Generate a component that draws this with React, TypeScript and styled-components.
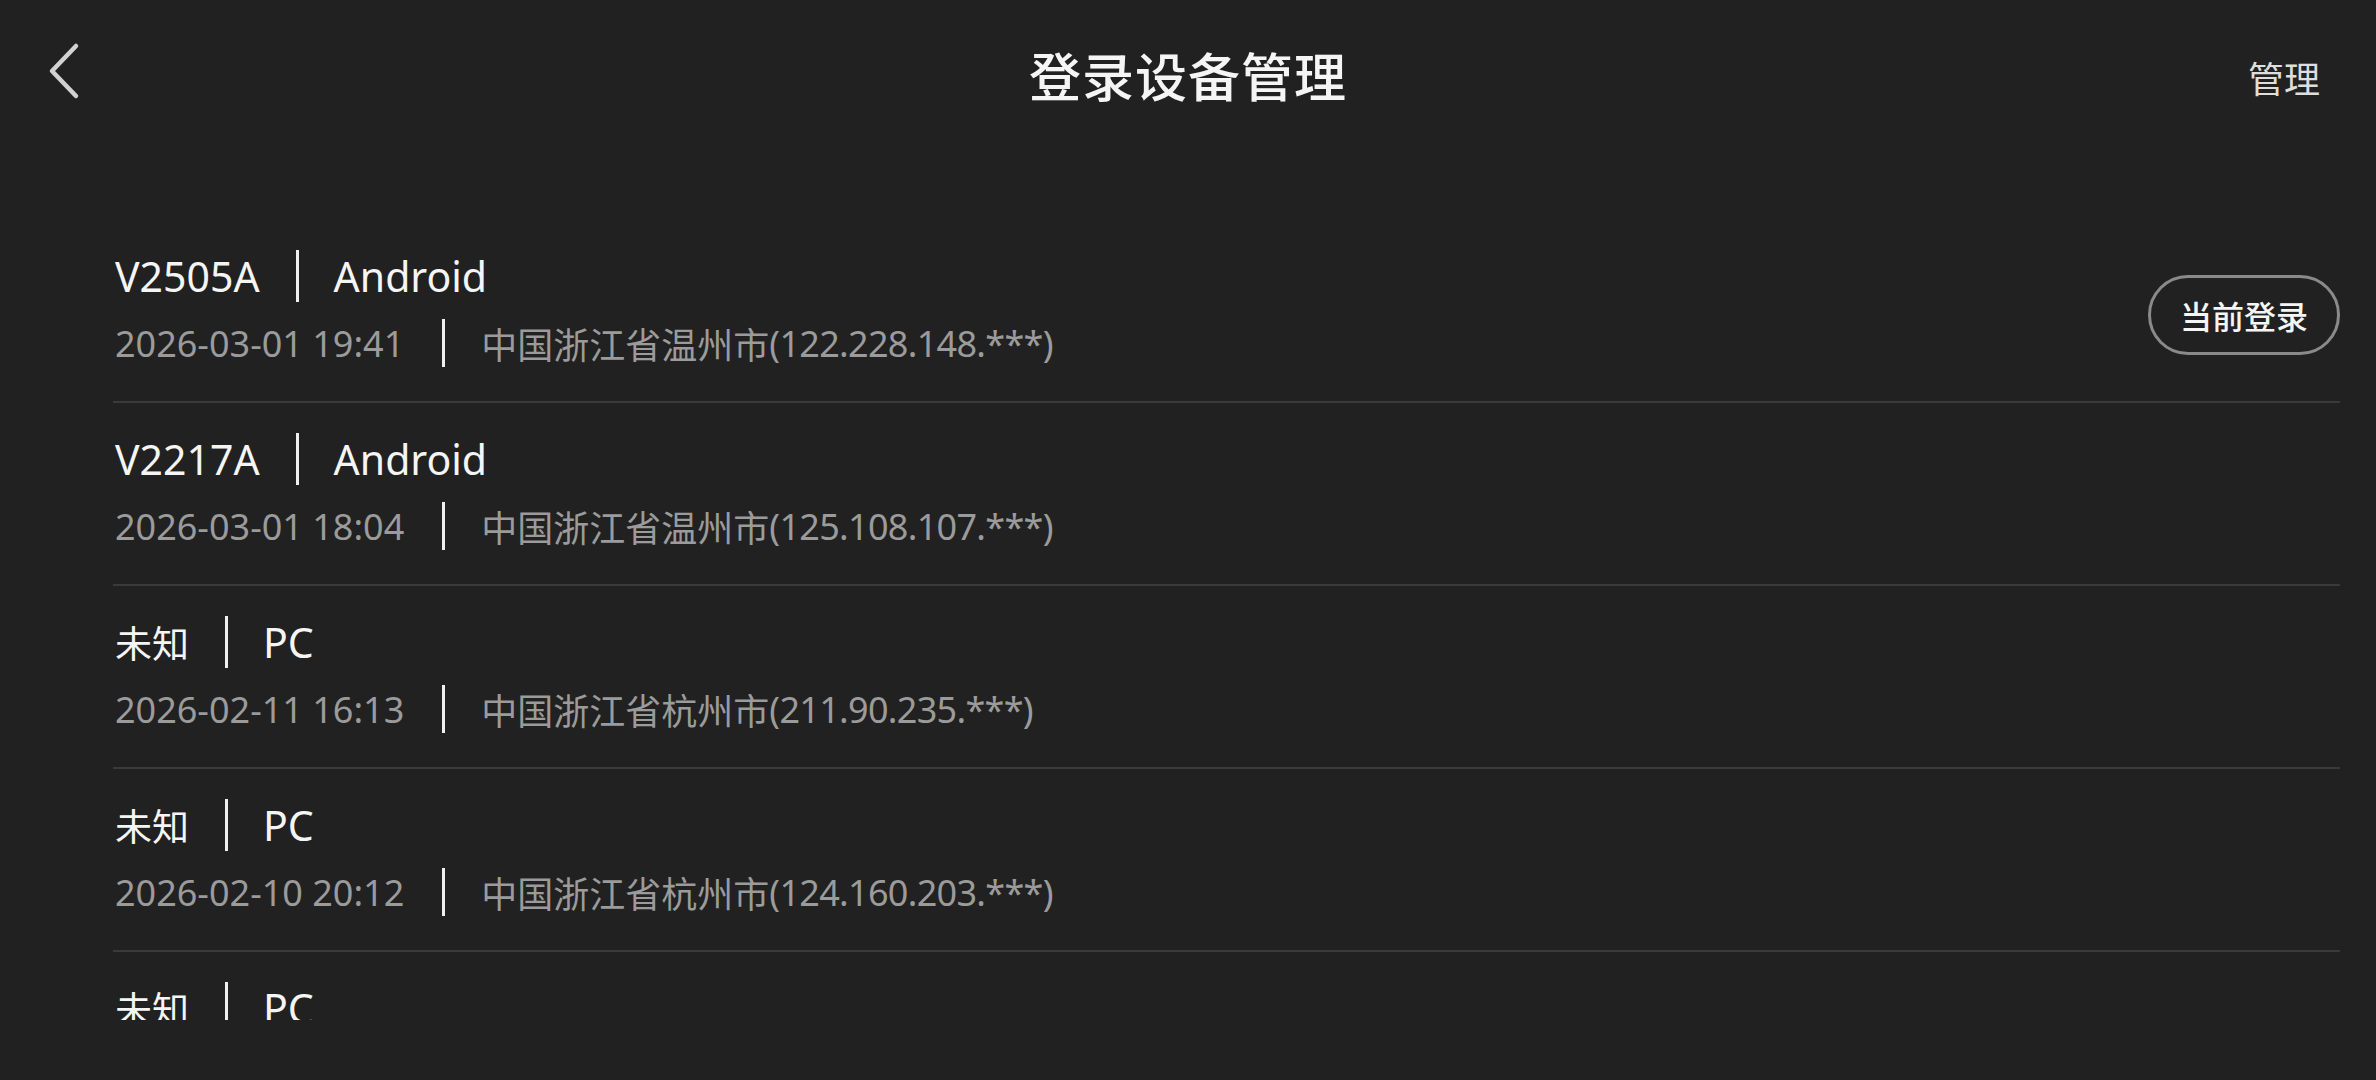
import styled, { createGlobalStyle } from "styled-components";

const GlobalStyle = createGlobalStyle`
  html, body {
    margin: 0;
    padding: 0;
    background: #212121;
  }
  body {
    font-family: "Noto Sans", "Noto Sans CJK SC", sans-serif;
    color: #f2f2f2;
  }
`;

const Screen = styled.div`
  width: 2376px;
  height: 1080px;
  background: #212121;
  display: flex;
  flex-direction: column;
  overflow: hidden;
`;

const Header = styled.header`
  height: 154px;
  flex: none;
  display: grid;
  grid-template-columns: 1fr auto 1fr;
  align-items: center;
`;

const BackButton = styled.button`
  justify-self: start;
  margin-left: 44px;
  padding: 0 0 14px 0;
  background: none;
  border: none;
  display: flex;
  cursor: pointer;
`;

const Title = styled.h1`
  margin: 0;
  font-size: 52px;
  font-weight: 500;
  color: #f5f5f5;
  line-height: 1;
  letter-spacing: 1px;
`;

const ManageLink = styled.span`
  justify-self: end;
  margin-right: 56px;
  font-size: 36px;
  color: #dedede;
`;

const List = styled.ul`
  list-style: none;
  margin: 66px 36px 0 113px;
  padding: 0;
  height: 800px;
  overflow: hidden;
  flex: none;
`;

const Row = styled.li`
  display: flex;
  align-items: center;
  justify-content: space-between;
  height: 183px;
  box-sizing: border-box;
  border-bottom: 2px solid #3a3a3a;
  padding-left: 2px;
`;

const Info = styled.div`
  display: flex;
  flex-direction: column;
  gap: 13px;
  padding-bottom: 4px;
`;

const Line = styled.div<{ $sub?: boolean }>`
  display: flex;
  align-items: center;
  height: ${({ $sub }) => ($sub ? "52px" : "56px")};
  font-size: ${({ $sub }) => ($sub ? "36px" : "41px")};
  color: ${({ $sub }) => ($sub ? "#9b9b9b" : "#f5f5f5")};
  white-space: nowrap;
`;

const Name = styled.span<{ $cjk?: boolean }>`
  font-size: ${({ $cjk }) => ($cjk ? "37px" : "inherit")};
`;

const Ip = styled.span`
  letter-spacing: -0.7px;
`;

const Bar = styled.span<{ $sub?: boolean }>`
  display: inline-block;
  width: 3px;
  height: ${({ $sub }) => ($sub ? "48px" : "52px")};
  background: #f0f0f0;
  margin: ${({ $sub }) => ($sub ? "0 36px 0 38px" : "0 35px 0 36px")};
`;

const CurrentBadge = styled.span`
  display: flex;
  align-items: center;
  justify-content: center;
  width: 192px;
  height: 80px;
  box-sizing: border-box;
  border: 3px solid #8a8a8a;
  border-radius: 40px;
  font-size: 32px;
  font-weight: 500;
  color: #f5f5f5;
  margin-top: 8px;
`;

type Device = {
  name: string;
  os: string;
  time: string;
  place: string;
  ip: string;
  current?: boolean;
};

const devices: Device[] = [
  { name: "V2505A", os: "Android", time: "2026-03-01 19:41", place: "中国浙江省温州市", ip: "(122.228.148.***)", current: true },
  { name: "V2217A", os: "Android", time: "2026-03-01 18:04", place: "中国浙江省温州市", ip: "(125.108.107.***)" },
  { name: "未知", os: "PC", time: "2026-02-11 16:13", place: "中国浙江省杭州市", ip: "(211.90.235.***)" },
  { name: "未知", os: "PC", time: "2026-02-10 20:12", place: "中国浙江省杭州市", ip: "(124.160.203.***)" },
  { name: "未知", os: "PC", time: "2026-02-09 10:26", place: "中国浙江省杭州市", ip: "(124.160.203.***)" },
];

const isAscii = (s: string) => /^[\x00-\x7f]*$/.test(s);

const App = () => {
  return (
    <Screen>
      <GlobalStyle />
      <Header>
        <BackButton aria-label="返回">
          <svg width="40" height="60" viewBox="0 0 40 60">
            <path
              d="M32 6 L8 31 L32 56"
              fill="none"
              stroke="#d2d2d2"
              strokeWidth="4.5"
              strokeLinecap="round"
              strokeLinejoin="round"
            />
          </svg>
        </BackButton>
        <Title>登录设备管理</Title>
        <ManageLink>管理</ManageLink>
      </Header>

      <List>
        {devices.map((d, i) => (
          <Row key={i}>
            <Info>
              <Line>
                <Name $cjk={!isAscii(d.name)}>{d.name}</Name>
                <Bar />
                {d.os}
              </Line>
              <Line $sub>
                {d.time}
                <Bar $sub />
                {d.place}
                <Ip>{d.ip}</Ip>
              </Line>
            </Info>
            {d.current && <CurrentBadge>当前登录</CurrentBadge>}
          </Row>
        ))}
      </List>
    </Screen>
  );
};

export default App;
